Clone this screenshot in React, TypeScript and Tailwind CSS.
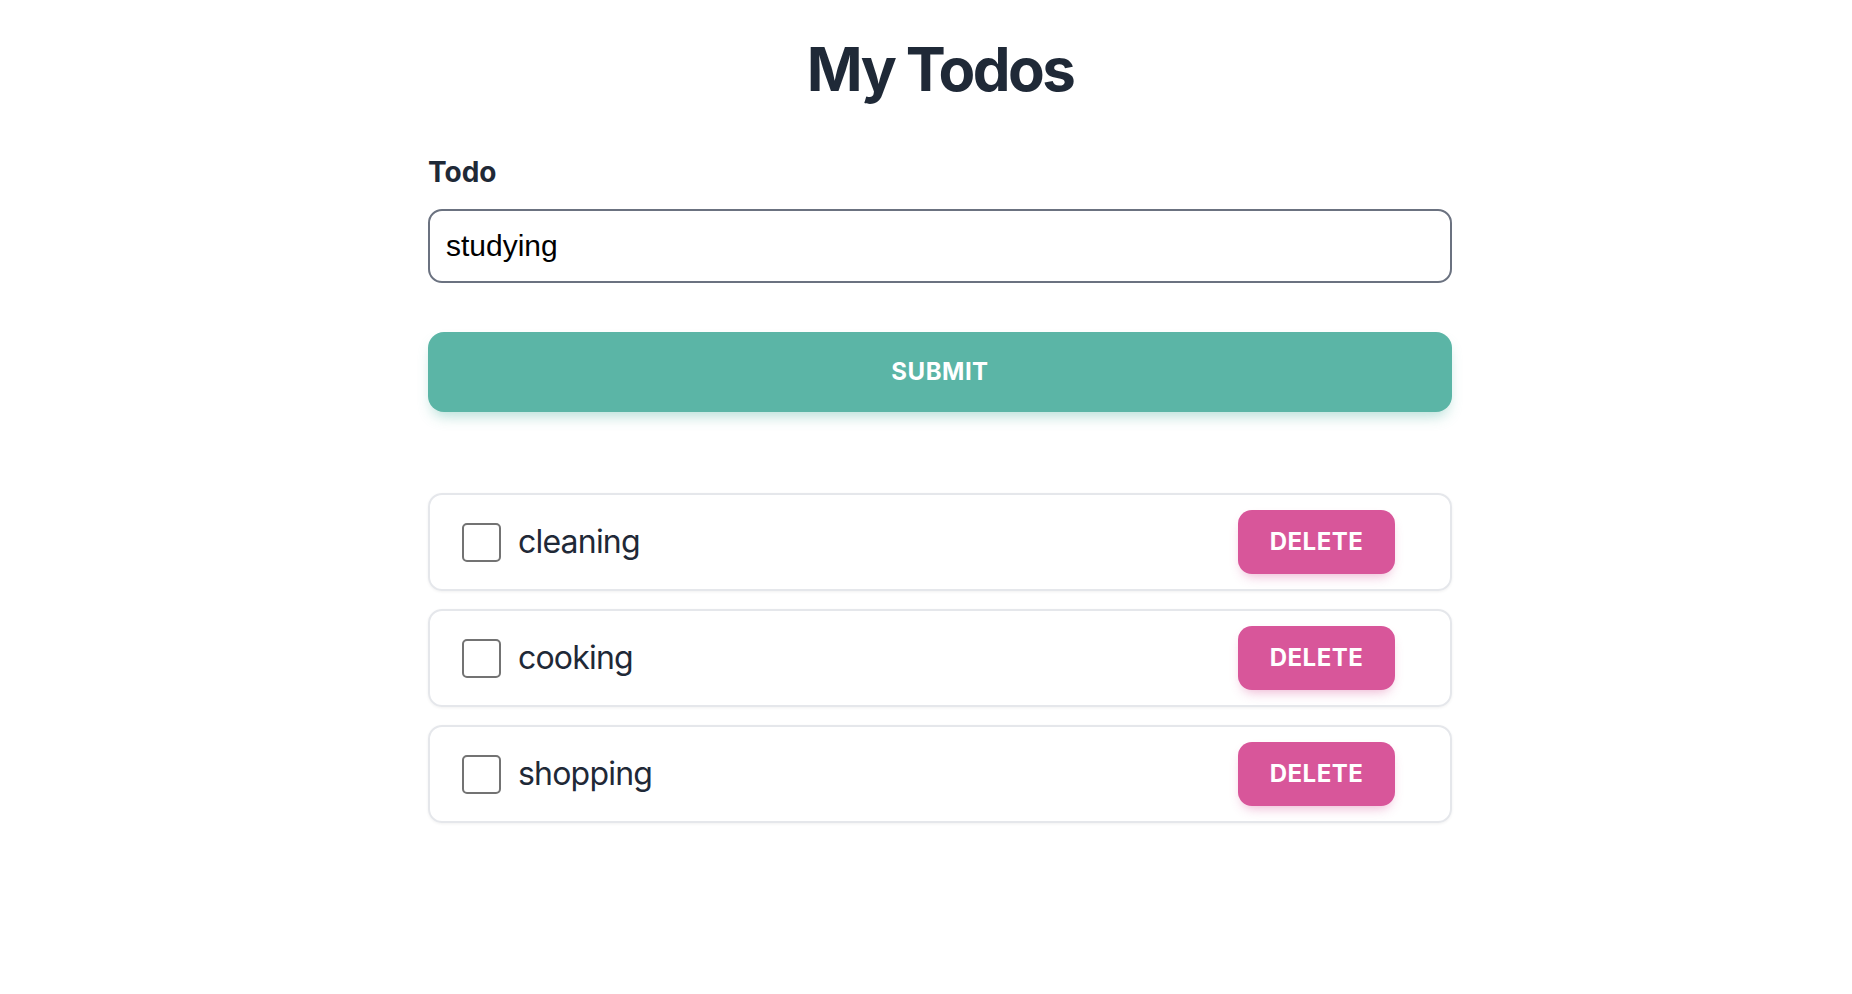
import React from "react";

const initialTodos = [
  { id: 1, text: "cleaning", done: false },
  { id: 2, text: "cooking", done: false },
  { id: 3, text: "shopping", done: false },
];

const App = () => {
  const [todo, setTodo] = React.useState("studying");
  const [todos, setTodos] = React.useState(initialTodos);

  const onSubmit = (e: React.FormEvent) => {
    e.preventDefault();
    if (!todo) return;
    setTodos([...todos, { id: Date.now(), text: todo, done: false }]);
    setTodo("");
  };

  const onToggle = (id: number) => {
    setTodos(todos.map((t) => (t.id === id ? { ...t, done: !t.done } : t)));
  };

  const onDelete = (id: number) => {
    setTodos(todos.filter((t) => t.id !== id));
  };

  return (
    <div className="min-h-screen bg-white font-['Inter','Liberation_Sans',sans-serif] flex justify-center pl-[28px]">
      <div className="w-[1024px] flex flex-col">
        <h1 className="pt-[39px] text-center text-[60px] leading-[60px] font-bold tracking-[-2.6px] text-[#1f2937]">
          My Todos
        </h1>

        <form onSubmit={onSubmit} className="flex flex-col mt-[59px]">
          <label className="text-[28px] leading-[28px] font-bold text-[#1f2937]">
            Todo
          </label>
          <input
            className="mt-[23px] h-[74px] w-full rounded-[14px] border-2 border-[#6b7280] px-[16px] font-['Liberation_Sans',Arial,sans-serif] text-[30px] text-black outline-none"
            type="text"
            value={todo}
            onChange={(e) => setTodo(e.target.value)}
          />
          <button
            type="submit"
            className="mt-[49px] h-[80px] w-full rounded-[16px] bg-[#5bb5a6] text-[24px] font-bold uppercase tracking-[0.5px] text-white shadow-[0_8px_14px_-4px_rgba(91,181,166,0.45)]"
          >
            Submit
          </button>
        </form>

        <div className="mt-[81px] flex flex-col gap-[18px]">
          {todos.map((t) => (
            <div
              key={t.id}
              className="h-[98px] flex items-center rounded-[14px] border-2 border-[#e5e7eb] pl-[32px] pr-[55px] shadow-[0_1px_3px_rgba(0,0,0,0.06)]"
            >
              <button
                onClick={() => onToggle(t.id)}
                className="w-[39px] h-[39px] rounded-[5px] border-2 border-[#737373] flex items-center justify-center"
              >
                {t.done ? (
                  <svg width="24" height="24" viewBox="0 0 24 24" fill="none" stroke="#1f2937" strokeWidth="3">
                    <path d="M5 12l5 5 9-10" />
                  </svg>
                ) : null}
              </button>
              <span
                className={
                  "ml-[17px] flex-1 text-[32px] tracking-[-0.8px] text-[#1f2937] " +
                  (t.done ? "line-through" : "")
                }
              >
                {t.text}
              </span>
              <button
                onClick={() => onDelete(t.id)}
                className="w-[157px] h-[64px] rounded-[14px] bg-[#d8569a] text-[24px] font-bold uppercase tracking-[0.5px] text-white shadow-[0_6px_12px_-4px_rgba(216,86,154,0.45)]"
              >
                Delete
              </button>
            </div>
          ))}
        </div>
      </div>
    </div>
  );
};

export default App;
